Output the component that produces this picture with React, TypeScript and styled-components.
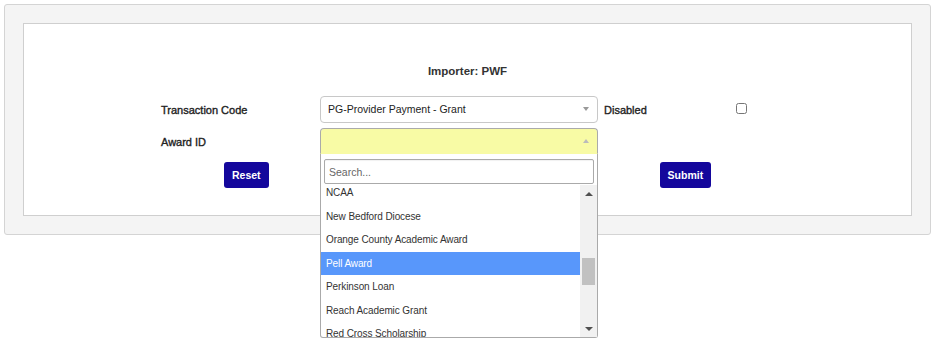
import React from 'react';
import styled, { createGlobalStyle } from 'styled-components';

const awards = [
  'NCAA',
  'New Bedford Diocese',
  'Orange County Academic Award',
  'Pell Award',
  'Perkinson Loan',
  'Reach Academic Grant',
  'Red Cross Scholarship',
];

const GlobalStyle = createGlobalStyle`
  html, body {
    margin: 0;
    min-height: 100%;
  }
  body {
    background: #fff;
    font-family: "Liberation Sans", Arial, sans-serif;
    color: #333;
  }
`;

const App: React.FC = () => {
  return (
    <>
      <GlobalStyle />
      <Page>
        <OuterPanel>
          <InnerPanel>
            <Title>Importer: PWF</Title>
            <FormGrid>
              <Label>Transaction Code</Label>
              <SelectWrap>
                <SelectBox>
                  <SelectText>PG-Provider Payment - Grant</SelectText>
                  <Caret />
                </SelectBox>
              </SelectWrap>
              <SideLabel>Disabled</SideLabel>
              <CheckCell>
                <Checkbox type="checkbox" />
              </CheckCell>

              <Label>Award ID</Label>
              <SelectWrap>
                <SelectBox open highlight>
                  <SelectText />
                  <Caret up />
                </SelectBox>
                <Dropdown>
                  <SearchWrap>
                    <SearchInput placeholder="Search..." />
                  </SearchWrap>
                  <ListArea>
                    <Options>
                      {awards.map(a => (
                        <Option key={a} active={a === 'Pell Award'}>{a}</Option>
                      ))}
                    </Options>
                    <ScrollTrack>
                      <ScrollArrow />
                      <ScrollBody>
                        <Thumb />
                      </ScrollBody>
                      <ScrollArrow down />
                    </ScrollTrack>
                  </ListArea>
                </Dropdown>
              </SelectWrap>
              <span />
              <span />
            </FormGrid>
            <ButtonRow>
              <Button>Reset</Button>
              <Button>Submit</Button>
            </ButtonRow>
          </InnerPanel>
        </OuterPanel>
      </Page>
    </>
  );
};

const Page = styled.div`
  min-height: 344px;
  box-sizing: border-box;
  padding: 4px 5px 4px 4px;
`;

const OuterPanel = styled.div`
  background: #f4f4f4;
  border: 1px solid #d4d4d4;
  border-radius: 3px;
  padding: 18px;
`;

const InnerPanel = styled.div`
  background: #fff;
  border: 1px solid #cfcfcf;
  padding: 40px 0 27px 0;
`;

const Title = styled.div`
  text-align: center;
  font-size: 11.5px;
  font-weight: bold;
  line-height: 14px;
  color: #333;
  margin-bottom: 18px;
`;

const FormGrid = styled.div`
  display: grid;
  grid-template-columns: 159px 278px 138px 20px;
  row-gap: 5px;
  align-items: center;
  padding-left: 137px;
`;

const Label = styled.div`
  font-size: 11px;
  color: #222;
  -webkit-text-stroke: 0.35px #222;
  margin-top: 1px;
`;

const SideLabel = styled(Label)`
  padding-left: 6px;
`;

const CheckCell = styled.div`
  display: flex;
  align-items: center;
`;

const Checkbox = styled.input`
  width: 11px;
  height: 11px;
  margin: 0;
  margin-top: -2px;
`;

const SelectWrap = styled.div`
  position: relative;
`;

const SelectBox = styled.div<{ open?: boolean; highlight?: boolean }>`
  display: flex;
  align-items: center;
  height: ${p => (p.open ? '26px' : '27px')};
  border: 1px solid;
  border-color: ${p => (p.open ? '#aaa' : '#c8c8c8')};
  border-radius: ${p => (p.open ? '4px 4px 0 0' : '4px')};
  border-bottom-color: ${p => (p.open ? '#f8fba5' : '#c8c8c8')};
  background: ${p => (p.highlight ? '#f8fba5' : '#fff')};
  padding: 0 8px 0 7px;
  box-sizing: border-box;
  background-clip: padding-box;
`;

const SelectText = styled.span`
  flex: 1;
  font-size: 10.5px;
  color: #222;
  margin-top: -2px;
`;

const Caret = styled.span<{ up?: boolean }>`
  width: 0;
  height: 0;
  border-left: 3.5px solid transparent;
  border-right: 3.5px solid transparent;
  ${p =>
    p.up
      ? 'border-bottom: 4px solid #bbb;'
      : 'border-top: 4px solid #999;'}
  margin-top: -1px;
`;

const Dropdown = styled.div`
  position: absolute;
  top: 100%;
  left: 0;
  right: 0;
  z-index: 10;
  background: #fff;
  border: 1px solid #aaa;
  border-top: none;
  border-radius: 0 0 3px 3px;
  box-sizing: border-box;
`;

const SearchWrap = styled.div`
  padding: 5px 3px 1px 3px;
`;

const SearchInput = styled.input`
  display: block;
  width: 100%;
  height: 25px;
  box-sizing: border-box;
  border: 1px solid #aaa;
  border-radius: 2px;
  padding: 0 4px;
  font-family: "Liberation Sans", Arial, sans-serif;
  font-size: 10.5px;
  color: #333;
  outline: none;
  box-shadow: inset 0 1px 1px rgba(0, 0, 0, 0.06);
  &::placeholder {
    color: #666;
  }
`;

const ListArea = styled.div`
  display: flex;
  height: 152px;
  overflow: hidden;
`;

const Options = styled.ul`
  flex: 1;
  list-style: none;
  margin: -4px 0 0 0;
  padding: 0;
`;

const Option = styled.li<{ active?: boolean }>`
  height: 23.5px;
  line-height: 23.5px;
  padding: 0 5px;
  font-size: 10px;
  letter-spacing: -0.1px;
  color: ${p => (p.active ? '#fff' : '#333')};
  background: ${p => (p.active ? '#5897fb' : 'transparent')};
  white-space: nowrap;
`;

const ScrollTrack = styled.div`
  width: 17px;
  background: #f1f1f1;
  display: flex;
  flex-direction: column;
`;

const ScrollArrow = styled.div<{ down?: boolean }>`
  height: 17px;
  display: flex;
  align-items: center;
  justify-content: center;
  &::after {
    content: '';
    width: 0;
    height: 0;
    border-left: 4px solid transparent;
    border-right: 4px solid transparent;
    ${p =>
      p.down
        ? 'border-top: 4px solid #505050;'
        : 'border-bottom: 4px solid #505050;'}
  }
`;

const ScrollBody = styled.div`
  flex: 1;
  padding: 56px 2px 0 2px;
`;

const Thumb = styled.div`
  height: 27px;
  background: #c1c1c1;
`;

const ButtonRow = styled.div`
  display: flex;
  gap: 391px;
  padding-left: 200px;
  margin-top: 8px;
`;

const Button = styled.button`
  height: 26px;
  padding: 0 8px;
  background: #14079c;
  color: #fff;
  border: none;
  border-radius: 3px;
  font-family: "Liberation Sans", Arial, sans-serif;
  font-size: 10.5px;
  font-weight: bold;
  cursor: pointer;
`;

export default App;
